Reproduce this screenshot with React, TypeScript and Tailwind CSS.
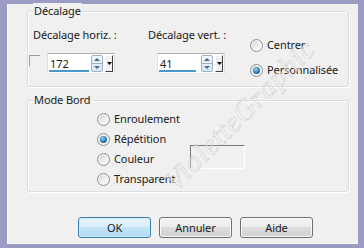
import type { ReactNode } from "react";

const Radio = ({ checked = false }: { checked?: boolean }) => (
  <span className="flex h-[13px] w-[13px] shrink-0 items-center justify-center rounded-full border border-[#8e8f8f] bg-[linear-gradient(135deg,#cfcfcf,#f7f7f7_70%,#ffffff)] shadow-[inset_0_0_0_1px_#f6f6f6]">
    {checked && (
      <span className="h-[7px] w-[7px] rounded-full bg-[radial-gradient(circle_at_40%_35%,#9ad6f7,#2b77ad_55%,#0f3f69)]" />
    )}
  </span>
);

const RadioRow = ({
  label,
  checked,
  children,
}: {
  label: string;
  checked?: boolean;
  children?: ReactNode;
}) => (
  <div className="flex h-[16px] items-center gap-[4px]">
    <Radio checked={checked} />
    <span className="leading-[16px]">{label}</span>
    {children}
  </div>
);

const Group = ({
  label,
  className,
  children,
}: {
  label: string;
  className: string;
  children: ReactNode;
}) => (
  <div
    className={`relative rounded-[3px] border border-[#d5dfe5] shadow-[inset_1px_1px_0_#fff,1px_1px_0_#fff] ${className}`}
  >
    <span className="absolute left-[5px] top-[-9px] bg-[#f0f0f0] px-[1px] leading-[16px]">
      {label}
    </span>
    {children}
  </div>
);

const SpinField = ({ value, bar }: { value: string; bar: string }) => (
  <div className="relative flex h-[21px] w-[68px] items-center border border-[#abadb3] border-b-[#e3e9ef] border-l-[#e2e3ea] border-r-[#dbdfe6] bg-white">
    <span className="ml-[2px] leading-[16px]">{value}</span>
    {/* spinner */}
    <div className="ml-auto flex h-[17px] w-[12px] flex-col overflow-hidden rounded-[2px] border border-[#9db3c9] bg-gradient-to-b from-[#f4f8fc] to-[#d3e5f4]">
      <div className="flex flex-1 items-center justify-center border-b border-[#9db3c9]">
        <svg width="6" height="3" viewBox="0 0 6 3">
          <path d="M0 3 L3 0 L6 3 Z" fill="#4e6a8c" />
        </svg>
      </div>
      <div className="flex flex-1 items-center justify-center">
        <svg width="6" height="3" viewBox="0 0 6 3">
          <path d="M0 0 L3 3 L6 0 Z" fill="#4e6a8c" />
        </svg>
      </div>
    </div>
    {/* dropdown */}
    <div className="ml-[2px] mr-[1px] flex h-[17px] w-[8px] items-center justify-center border border-l-white border-t-white border-r-[#404040] border-b-[#404040] bg-[#f0f0f0]">
      <svg width="5" height="3" viewBox="0 0 5 3">
        <path d="M0 0 L2.5 3 L5 0 Z" fill="#000" />
      </svg>
    </div>
    <div className={`absolute bottom-[1px] left-[1px] h-[2px] bg-[#4a97cc] ${bar}`} />
  </div>
);

const Button = ({ label, primary = false }: { label: string; primary?: boolean }) => (
  <button
    className={
      primary
        ? "h-[21px] w-[73px] rounded-[3px] border border-[#3c7fb1] bg-[linear-gradient(#e9f5fd,#d6eefb_50%,#c3e5f8_50%,#aedaf3)] leading-[16px] shadow-[inset_0_0_0_1px_#cfeafa]"
        : "h-[21px] w-[73px] rounded-[3px] border border-[#707070] bg-[linear-gradient(#f2f2f2,#ebebeb_50%,#dddddd_50%,#d0d0d0)] leading-[16px] shadow-[inset_0_0_0_1px_#fbfbfb]"
    }
  >
    {label}
  </button>
);

export default function App() {
  return (
    <div className="relative h-[248px] w-[364px] overflow-hidden bg-[#9c9bc4] pb-[4px] pl-[7px] pr-[6px] pt-[4px] font-['Noto_Sans','Open_Sans',sans-serif] text-[11px] tracking-[-0.1px] text-[#1a1a1a]">
      <div className="flex h-full w-full flex-col bg-[#f0f0f0] pt-[7px] shadow-[inset_1px_0_0_#fafafa,inset_0_-1px_0_#fafafa]">
        {/* Décalage */}
        <Group label="Décalage" className="ml-[20px] h-[76px] w-[322px]">
          <div className="flex pt-[15px]">
            <div className="w-[119px]">
              <div className="pl-[5px] leading-[16px]">Décalage horiz. :</div>
              <div className="mt-[10px] flex items-start pl-[1px]">
                <span className="mt-[2px] h-[11px] w-[11px] border-l border-t border-[#9a9a9a]" />
                <div className="ml-[7px]">
                  <SpinField value="172" bar="w-[40px]" />
                </div>
              </div>
            </div>
            <div className="w-[103px]">
              <div className="pl-[1px] leading-[16px]">Décalage vert. :</div>
              <div className="ml-[10px] mt-[10px]">
                <SpinField value="41" bar="w-[37px]" />
              </div>
            </div>
            <div className="flex flex-col gap-[9px] pt-[10px]">
              <RadioRow label="Centrer" />
              <RadioRow label="Personnalisée" checked />
            </div>
          </div>
        </Group>

        {/* Mode Bord */}
        <Group label="Mode Bord" className="ml-[20px] mt-[13px] h-[92px] w-[322px]">
          <div className="flex flex-col gap-[4px] pl-[69px] pt-[10px]">
            <RadioRow label="Enroulement" />
            <RadioRow label="Répétition" checked />
            <div className="flex h-[16px] items-center gap-[4px]">
              <Radio />
              <span className="w-[72px] leading-[16px]">Couleur</span>
              <span className="mb-[4px] h-[24px] w-[55px] shrink-0 border border-b-white border-l-[#7a7a7a] border-r-white border-t-[#7a7a7a] bg-[#f0f0f0]" />
            </div>
            <RadioRow label="Transparent" />
          </div>
        </Group>

        {/* Buttons */}
        <div className="ml-[71px] mt-[25px] flex gap-[8px]">
          <Button label="OK" primary />
          <Button label="Annuler" />
          <Button label="Aide" />
        </div>
      </div>

      {/* watermark */}
      <span className="pointer-events-none absolute left-[240px] top-[115px] -translate-x-1/2 -translate-y-1/2 -rotate-45 whitespace-nowrap font-['Liberation_Serif',serif] text-[29px] italic tracking-[1px] text-white/40 [-webkit-text-stroke:0.5px_#cacaca]">
        VioletteGraphic
      </span>
    </div>
  );
}
